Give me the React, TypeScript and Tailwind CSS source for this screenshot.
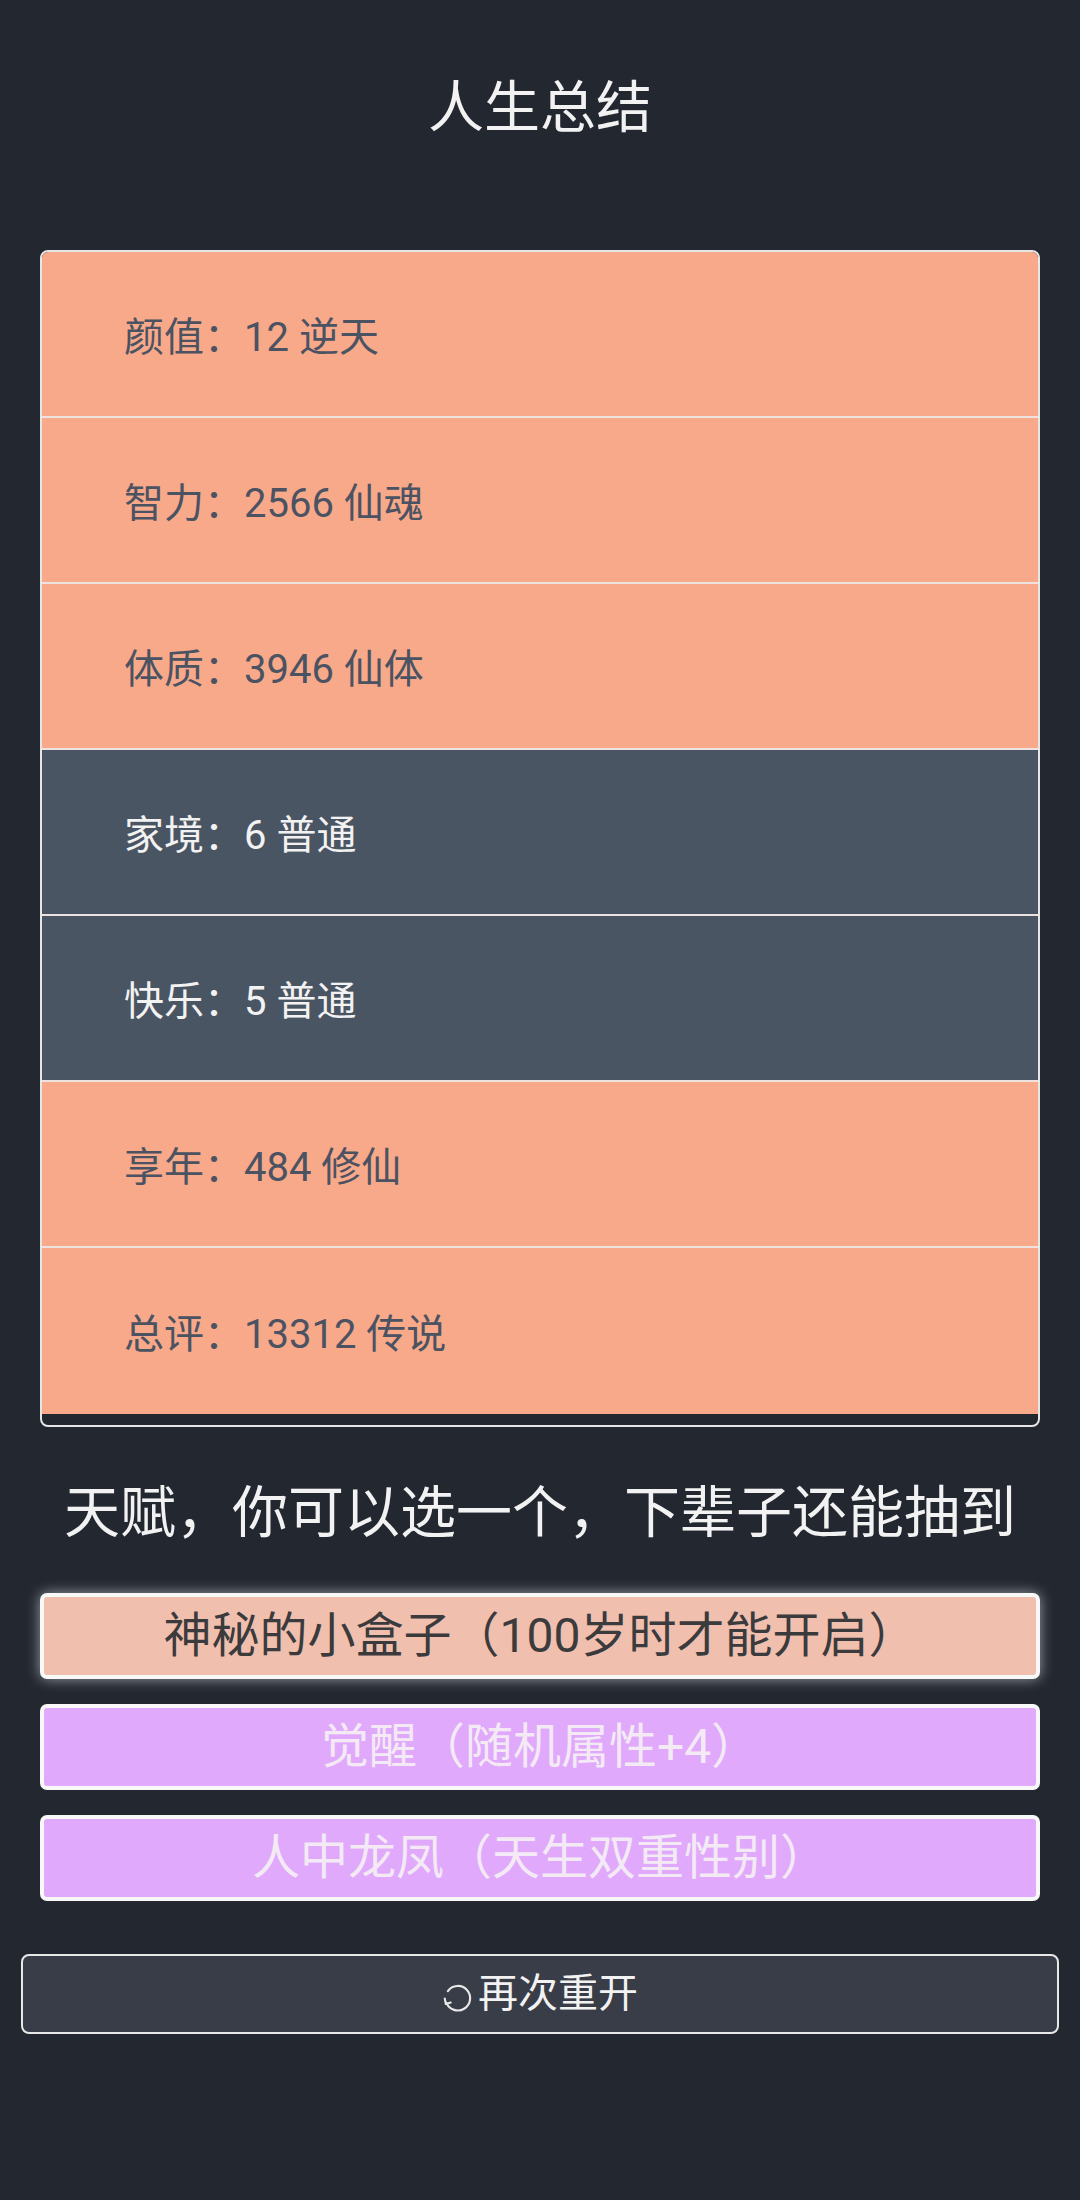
import React from "react";

const rows: { label: string; value: string; dark: boolean }[] = [
  { label: "颜值：", value: "12 逆天", dark: false },
  { label: "智力：", value: "2566 仙魂", dark: false },
  { label: "体质：", value: "3946 仙体", dark: false },
  { label: "家境：", value: "6 普通", dark: true },
  { label: "快乐：", value: "5 普通", dark: true },
  { label: "享年：", value: "484 修仙", dark: false },
  { label: "总评：", value: "13312 传说", dark: false },
];

function RestartIcon() {
  return (
    <svg width="32" height="32" viewBox="0 0 30 30" fill="none" className="mr-[4px] mt-[8px]">
      <path
        d="M5.5 8.5 A11.5 11.5 0 1 1 4.2 19.5"
        stroke="#e8e8e8"
        strokeWidth="2"
        strokeLinecap="round"
        fill="none"
      />
      <path d="M2.6 15.6 L3.6 20.6 L8.2 19.2" stroke="#e8e8e8" strokeWidth="2" strokeLinecap="round" strokeLinejoin="round" fill="none" />
    </svg>
  );
}

export default function App() {
  return (
    <div
      className="min-h-[2200px] w-full bg-[#222730] text-[#f0f0f0]"
      style={{ fontFamily: 'Roboto, "Noto Sans CJK SC", "Noto Sans", sans-serif' }}
    >
      <h1 className="pt-[66px] text-center text-[56px] leading-[84px] font-normal text-[#f2f2f2]">
        人生总结
      </h1>

      <div className="mx-[40px] mt-[100px] rounded-[8px] border-2 border-[#e6e6e6] pb-[11px] overflow-hidden">
        {rows.map((r, i) => (
          <div
            key={i}
            className={
              (r.dark ? "bg-[#4a5563] text-[#f2f2f2] " : "bg-[#f7a98a] text-[#4b5262] ") +
              (i < rows.length - 1 ? "border-b-2 border-[#ece3e0] " : "") +
              "flex h-[166px] items-center pl-[82px] pt-[8px] text-[40px]"
            }
          >
            <span>{r.label}</span>
            <span>{r.value}</span>
          </div>
        ))}
      </div>

      <h2 className="mt-[44px] text-center text-[56px] leading-[84px] font-normal text-[#f2f2f2]">
        天赋，你可以选一个，下辈子还能抽到
      </h2>

      <div className="mx-[40px] mt-[38px] flex flex-col gap-[25px]">
        <div className="flex h-[86px] items-center justify-center rounded-[7px] border-4 border-[#f8f8f8] bg-[#f0bfae] text-[48px] text-[#3b3a3c] shadow-[0_0_14px_rgba(255,255,255,0.55)]">
          神秘的小盒子（100岁时才能开启）
        </div>
        <div className="flex h-[86px] items-center justify-center rounded-[7px] border-4 border-[#f8f8f8] bg-[#e1a9fb] text-[48px] text-[#f3eaf5]">
          觉醒（随机属性+4）
        </div>
        <div className="flex h-[86px] items-center justify-center rounded-[7px] border-4 border-[#f8f8f8] bg-[#e1a9fb] text-[48px] text-[#f3eaf5]">
          人中龙凤（天生双重性别）
        </div>
      </div>

      <div className="mx-[21px] mt-[53px] flex h-[80px] items-center justify-center rounded-[8px] border-2 border-[#e8e8e8] bg-[#393d47] text-[40px] text-[#f2f2f2]">
        <RestartIcon />
        <span>再次重开</span>
      </div>
    </div>
  );
}
